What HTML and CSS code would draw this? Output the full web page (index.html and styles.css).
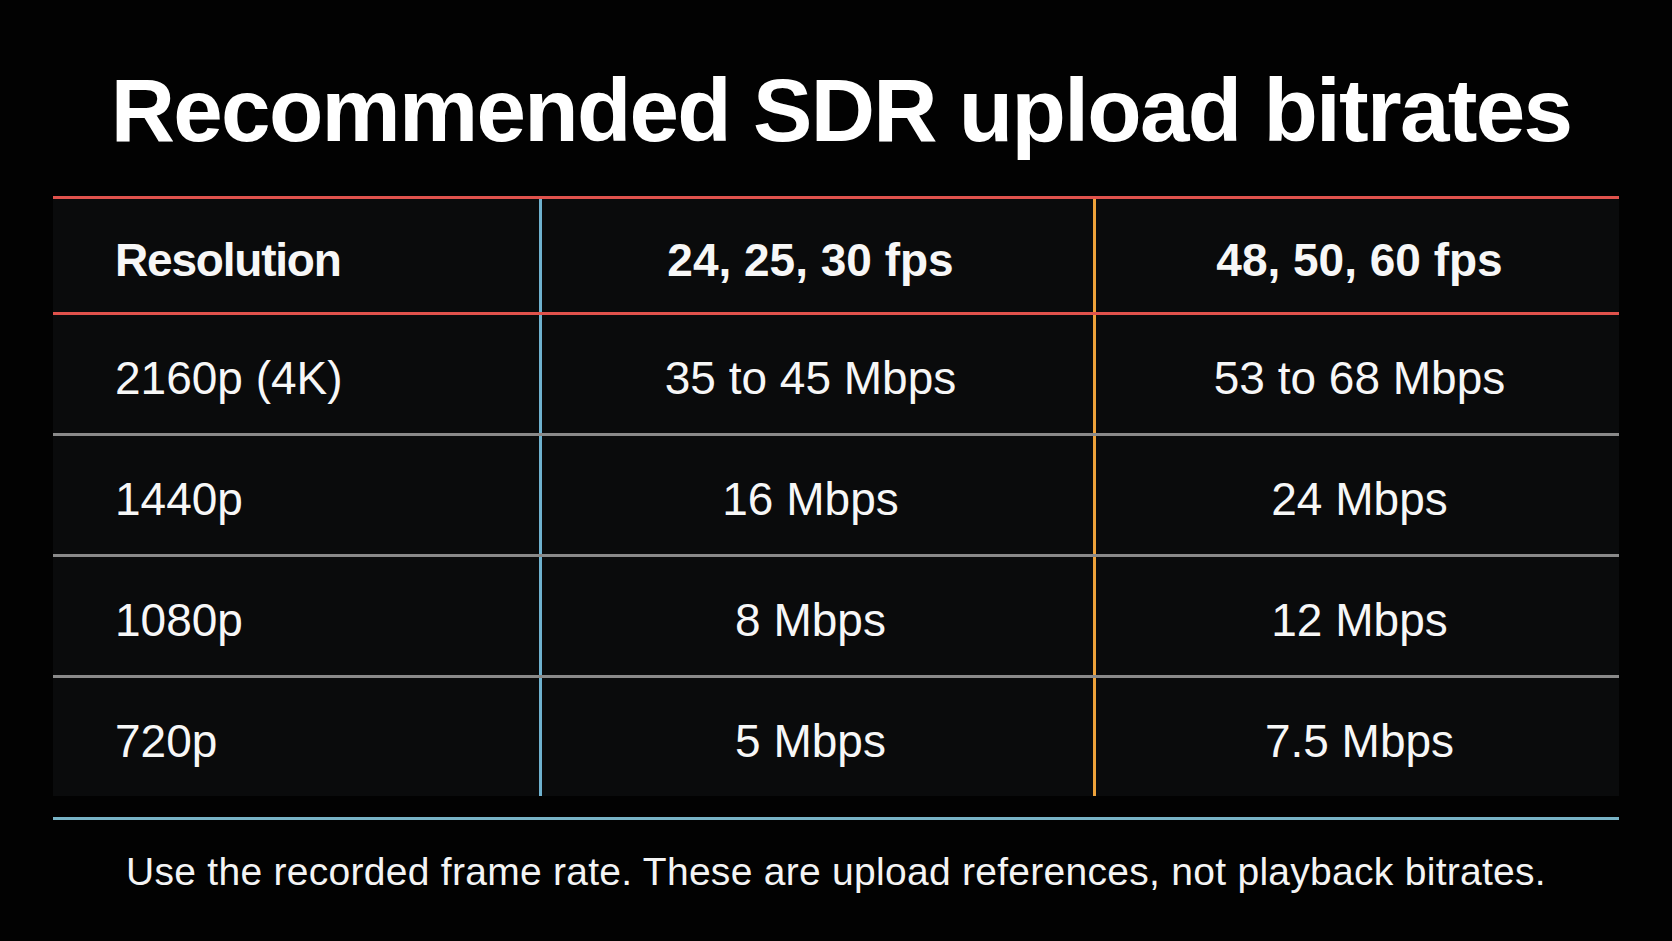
FILE: index.html
```html
<!DOCTYPE html>
<html lang="en">
<head>
<meta charset="utf-8">
<title>Recommended SDR upload bitrates</title>
<link rel="stylesheet" href="styles.css">
</head>
<body>
<main class="slide">
  <h1 class="title">Recommended SDR upload bitrates</h1>
  <div class="table">
    <div class="row head">
      <div class="cell c1">Resolution</div>
      <div class="cell c2">24, 25, 30 fps</div>
      <div class="cell c3">48, 50, 60 fps</div>
    </div>
    <div class="row">
      <div class="cell c1">2160p (4K)</div>
      <div class="cell c2">35 to 45 Mbps</div>
      <div class="cell c3">53 to 68 Mbps</div>
    </div>
    <div class="row">
      <div class="cell c1">1440p</div>
      <div class="cell c2">16 Mbps</div>
      <div class="cell c3">24 Mbps</div>
    </div>
    <div class="row">
      <div class="cell c1">1080p</div>
      <div class="cell c2">8 Mbps</div>
      <div class="cell c3">12 Mbps</div>
    </div>
    <div class="row last">
      <div class="cell c1">720p</div>
      <div class="cell c2">5 Mbps</div>
      <div class="cell c3">7.5 Mbps</div>
    </div>
  </div>
  <div class="rule"></div>
  <p class="note">Use the recorded frame rate. These are upload references, not playback bitrates.</p>
</main>
</body>
</html>
```

FILE: styles.css
```css
html, body {
  margin: 0;
  padding: 0;
  background: #020202;
}

body {
  width: 1672px;
  height: 941px;
  overflow: hidden;
  font-family: "Liberation Sans", Arial, sans-serif;
  color: #f7f7f7;
}

.slide {
  padding: 60px 53px 0;
}

.title {
  margin: 0;
  padding-left: 10px;
  height: 100px;
  line-height: 100px;
  font-size: 89px;
  font-weight: 700;
  letter-spacing: -1.7px;
  text-align: center;
  color: #ffffff;
}

.table {
  margin-top: 36px;
  background: #0a0b0c;
}

.row {
  display: grid;
  grid-template-columns: 489px 554px 1fr;
  height: 121px;
  border-bottom: 3px solid #8a8a8a;
  box-sizing: border-box;
}

.row.head {
  height: 119px;
  border-top: 3px solid #e0524c;
  border-bottom: 3px solid #e0524c;
  font-weight: 700;
}

.row.last {
  border-bottom: none;
  height: 118px;
}

.cell {
  display: flex;
  align-items: center;
  padding-top: 8px;
  font-size: 46px;
  line-height: 54px;
  box-sizing: border-box;
}

.c1 {
  padding-left: 62px;
  border-right: 3px solid #6fb2cf;
}

.c2 {
  justify-content: center;
  padding-right: 14px;
  border-right: 3px solid #eea23a;
}

.c3 {
  justify-content: center;
  padding-left: 4px;
}

.head .c1 {
  letter-spacing: -1.2px;
}

.rule {
  margin-top: 21px;
  height: 3px;
  background: #78b3c6;
}

.note {
  margin: 29px 0 0;
  font-size: 39px;
  line-height: 46px;
  letter-spacing: 0.28px;
  text-align: center;
  color: #f4f4f4;
}
```
